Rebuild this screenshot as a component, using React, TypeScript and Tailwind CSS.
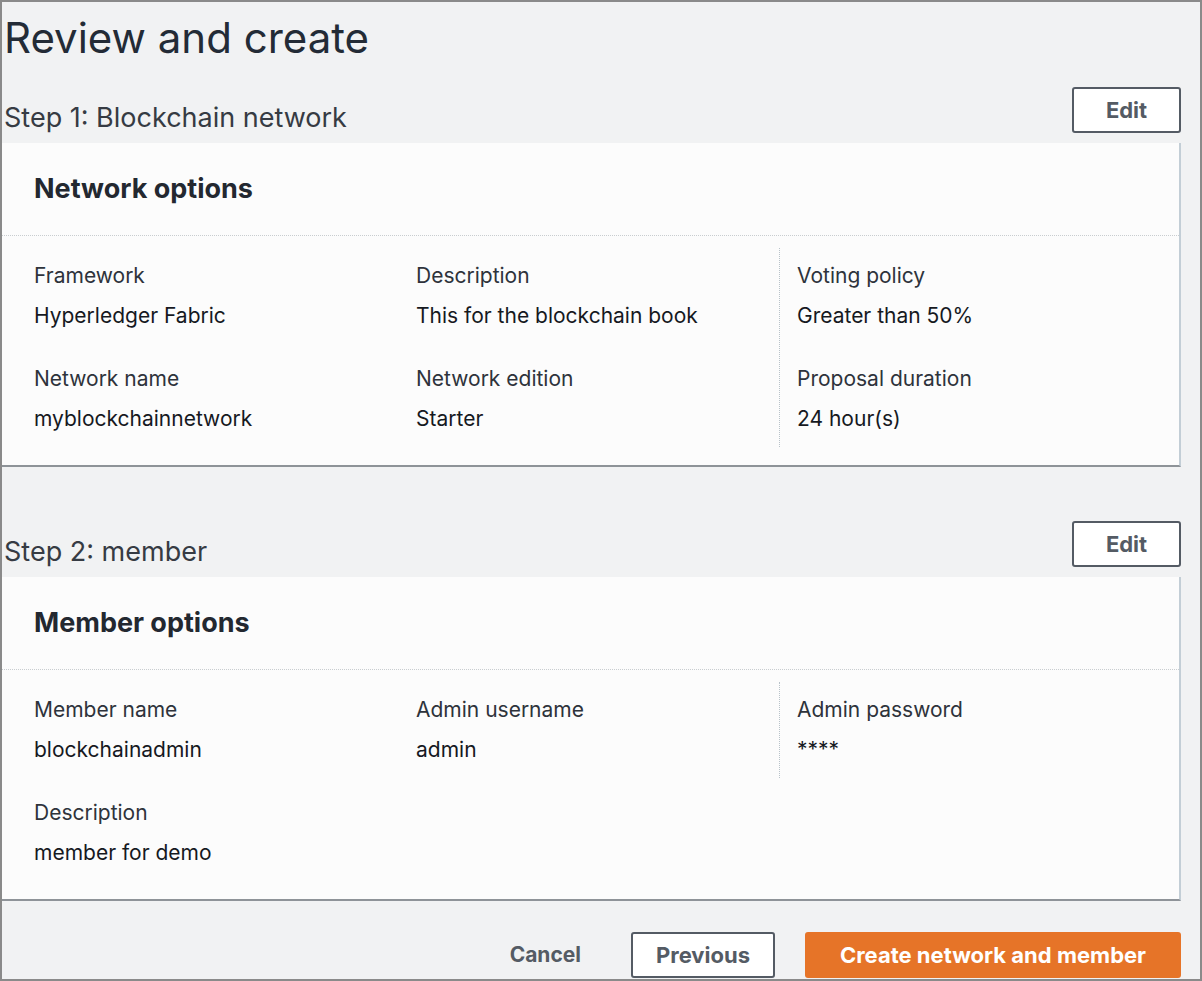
import React from "react";

type Item = { label: string; value: string };

function Field({ item }: { item: Item }) {
  return (
    <div className="flex flex-col gap-[12px]">
      <div className="text-[21px] leading-[28px] text-[#2e333b]">{item.label}</div>
      <div className="text-[21px] leading-[28px] text-[#16191f]">{item.value}</div>
    </div>
  );
}

function Column({ items, className }: { items: Item[]; className?: string }) {
  return (
    <div className={"flex flex-col gap-[35px] py-[14px] " + (className ?? "")}>
      {items.map((it) => (
        <Field key={it.label} item={it} />
      ))}
    </div>
  );
}

function StepHeader({ title }: { title: string }) {
  return (
    <div className="flex items-start justify-between">
      <h2 className="mt-[14px] pl-[2px] text-[27px] leading-[34px] text-[#363b43]">{title}</h2>
      <button className="h-[46px] w-[109px] rounded-[3px] border-2 border-[#545b64] bg-white text-[22px] font-bold text-[#545b64]">
        Edit
      </button>
    </div>
  );
}

function Card({
  title,
  col1,
  col2,
  col3,
}: {
  title: string;
  col1: Item[];
  col2: Item[];
  col3: Item[];
}) {
  return (
    <div className="mt-[8px] border-r-2 border-b-2 border-r-[#c3ced6] border-b-[#8e9398] bg-[#fcfcfc]">
      <div className="border-b border-dotted border-[#c9cdd0] px-[32px] pt-[30px] pb-[30px]">
        <h3 className="text-[27px] font-bold leading-[32px] text-[#232830]">{title}</h3>
      </div>
      <div className="flex items-start pt-[12px] pb-[18px] pl-[32px]">
        <Column items={col1} className="w-[382px]" />
        <Column items={col2} className="w-[363px]" />
        <Column items={col3} className="border-l border-dotted border-[#b8c2c9] pl-[17px]" />
      </div>
    </div>
  );
}

export default function App() {
  return (
    <div
      className="h-[981px] w-[1202px] overflow-hidden border-2 border-[#8a8a8a] bg-[#f1f2f3]"
      style={{ fontFamily: "Inter, Roboto, 'Liberation Sans', sans-serif" }}
    >
      <div className="pr-[19px]">
        <h1 className="pt-[12px] pl-[2px] text-[42px] leading-[48px] text-[#232b36]">Review and create</h1>

        <div className="mt-[25px]">
          <StepHeader title="Step 1: Blockchain network" />
          <Card
            title="Network options"
            col1={[
              { label: "Framework", value: "Hyperledger Fabric" },
              { label: "Network name", value: "myblockchainnetwork" },
            ]}
            col2={[
              { label: "Description", value: "This for the blockchain book" },
              { label: "Network edition", value: "Starter" },
            ]}
            col3={[
              { label: "Voting policy", value: "Greater than 50%" },
              { label: "Proposal duration", value: "24 hour(s)" },
            ]}
          />
        </div>

        <div className="mt-[54px]">
          <StepHeader title="Step 2: member" />
          <Card
            title="Member options"
            col1={[
              { label: "Member name", value: "blockchainadmin" },
              { label: "Description", value: "member for demo" },
            ]}
            col2={[{ label: "Admin username", value: "admin" }]}
            col3={[{ label: "Admin password", value: "****" }]}
          />
        </div>

        <div className="mt-[31px] flex items-center justify-end">
          <button className="mr-[50px] text-[21px] font-bold text-[#545b64]">Cancel</button>
          <button className="h-[46px] w-[144px] rounded-[3px] border-2 border-[#545b64] bg-white text-[22px] font-bold text-[#545b64]">
            Previous
          </button>
          <button className="ml-[30px] h-[46px] w-[376px] rounded-[3px] bg-[#e67428] text-[22px] font-bold text-white">
            Create network and member
          </button>
        </div>
      </div>
    </div>
  );
}
